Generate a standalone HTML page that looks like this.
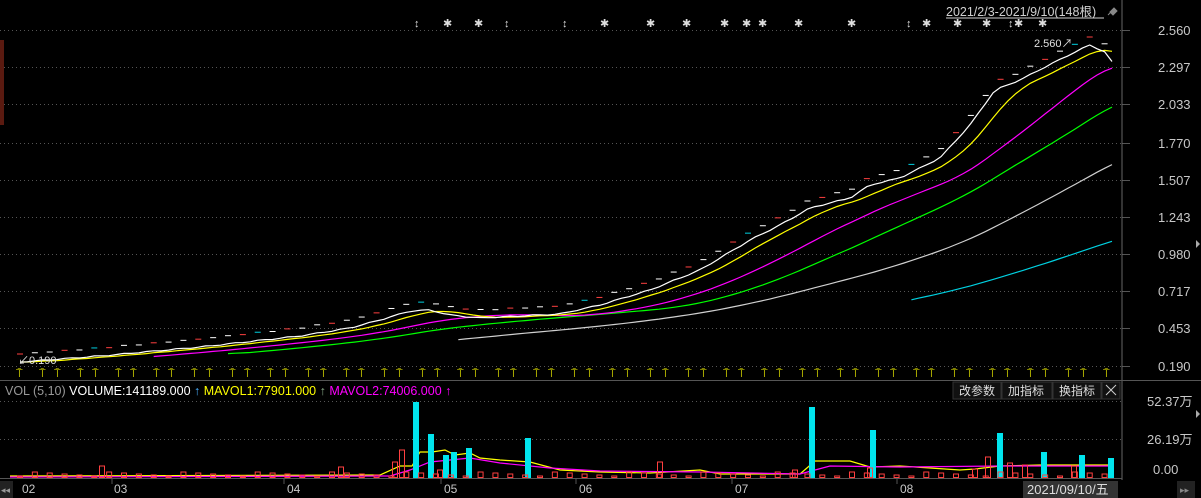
<!DOCTYPE html>
<html><head><meta charset="utf-8"><style>
html,body{margin:0;padding:0;background:#000;width:1201px;height:498px;overflow:hidden;font-family:"Liberation Sans","Noto Sans CJK SC",sans-serif}
svg{display:block}
text{font-family:"Liberation Sans","Noto Sans CJK SC",sans-serif}
</style></head><body>
<svg id="s" width="1201" height="498" xmlns="http://www.w3.org/2000/svg">
<rect width="1201" height="498" fill="#000"/>
<g id="grid" stroke="#555" stroke-dasharray="1,3" stroke-width="1"></g>
<line x1="1122" y1="0" x2="1122" y2="480" stroke="#666"/>
<line x1="0" y1="380.5" x2="1201" y2="380.5" stroke="#555"/>
<line x1="0" y1="478.5" x2="1122" y2="478.5" stroke="#555"/>
<rect x="0" y="40" width="4" height="85" fill="#5a1a10"/>
<g id="axis" fill="#c8c8c8" font-size="13"></g>
<g id="lines" fill="none" stroke-width="1.2"></g>
<g id="marks"></g>
<text x="946" y="16" fill="#d0d0d0" font-size="12.5">2021/2/3-2021/9/10(148根)</text>
<line x1="946" y1="18" x2="1104" y2="18" stroke="#d0d0d0"/>
<path d="M1110 12l4-4 3 3-4 4zM1111 12l-3 3" stroke="#888" fill="#888"/>
<text x="1034" y="47" fill="#e0e0e0" font-size="11">2.560↗</text>
<text x="18" y="364" fill="#e0e0e0" font-size="11">↙0.190</text>
<text x="5" y="395" font-size="12.5"><tspan fill="#999">VOL (5,10) </tspan><tspan fill="#fff">VOLUME:141189.000 </tspan><tspan fill="#4ab0ff">↑ </tspan><tspan fill="#ffff00">MAVOL1:77901.000 </tspan><tspan fill="#8a8">↑ </tspan><tspan fill="#ff00ff">MAVOL2:74006.000 ↑</tspan></text>
<g font-size="12" fill="#ddd">
<rect x="953" y="382" width="48" height="17" fill="#111" stroke="#333"/><text x="959" y="395">改参数</text>
<rect x="1002" y="382" width="50" height="17" fill="#111" stroke="#333"/><text x="1008" y="395">加指标</text>
<rect x="1053" y="382" width="48" height="17" fill="#111" stroke="#333"/><text x="1059" y="395">换指标</text>
<rect x="1102" y="382" width="18" height="17" fill="#111" stroke="#333"/><path d="M1106 385l10 10M1116 385l-10 10" stroke="#ccc"/>
</g>
<g font-size="13" fill="#c8c8c8">
<text x="1147" y="406">52.37万</text><text x="1147" y="444">26.19万</text><text x="1153" y="474">0.00</text>
</g>
<g font-size="12" fill="#c8c8c8">
<text x="22" y="493">02</text><text x="114" y="493">03</text><text x="287" y="493">04</text><text x="444" y="493">05</text><text x="579" y="493">06</text><text x="735" y="493">07</text><text x="900" y="493">08</text>
</g>
<g stroke="#555"><line x1="112" y1="479" x2="112" y2="484"/><line x1="284" y1="479" x2="284" y2="484"/><line x1="441" y1="479" x2="441" y2="484"/><line x1="576" y1="479" x2="576" y2="484"/><line x1="732" y1="479" x2="732" y2="484"/><line x1="897" y1="479" x2="897" y2="484"/></g>
<rect x="0" y="481" width="13" height="17" fill="#222"/><text x="1" y="493" fill="#999" font-size="9">◂◂</text>
<rect x="1023" y="481" width="95" height="17" fill="#333"/><text x="1027" y="494" fill="#ddd" font-size="13">2021/09/10/五</text>
<rect x="1177" y="481" width="18" height="17" fill="#222"/><text x="1180" y="493" fill="#888" font-size="9">▸▸</text>
<path d="M1196 240l4 4-4 4z" fill="#aaa"/><path d="M1196 410l4 4-4 4z" fill="#aaa"/>
</svg>
<script>
var ns="http://www.w3.org/2000/svg";
function el(p,t,a,txt){var e=document.createElementNS(ns,t);for(var k in a)e.setAttribute(k,a[k]);if(txt)e.textContent=txt;document.getElementById(p).appendChild(e);return e;}
var ly=[30,67,104,143,180,217,254,291,328,366],lb=["2.560","2.297","2.033","1.770","1.507","1.243","0.980","0.717","0.453","0.190"];
ly.forEach(function(y,i){el('grid','line',{x1:0,y1:y+.5,x2:1122,y2:y+.5});el('grid','line',{x1:1122,y1:y+.5,x2:1130,y2:y+.5,'stroke-dasharray':'none'});el('axis','text',{x:1158,y:y+5},lb[i]);});
el('grid','line',{x1:0,y1:401.5,x2:1122,y2:401.5});el('grid','line',{x1:0,y1:439.5,x2:1122,y2:439.5});
var K=[[20,362],[100,356],[200,347],[300,336],[350,328],[380,320],[410,311],[430,310],[450,315],[480,318],[520,316],[560,314],[600,305],[650,290],[700,270],[750,240],[780,225],[810,208],[850,198],[870,185],[900,178],[940,158],[970,125],[995,90],[1020,80],[1045,67],[1075,52],[1090,45],[1105,52],[1112,62]];
function f(x){for(var i=0;i<K.length-1;i++){if(x<=K[i+1][0]){var t=(x-K[i][0])/(K[i+1][0]-K[i][0]);return K[i][1]+t*(K[i+1][1]-K[i][1]);}}return K[K.length-1][1];}
var N=148,xs=[],ys=[];for(var i=0;i<N;i++){var x=20+i*(1092/(N-1));xs.push(x);ys.push(f(x)+Math.sin(i*1.7)*0.5);}
function line(vals,start,col){var d='';for(var i=start;i<N;i++)d+=(i==start?'M':'L')+xs[i].toFixed(1)+' '+vals[i].toFixed(1);el('lines','path',{d:d,stroke:col});}
function ma(n){var r=[];for(var i=0;i<N;i++){var s=0,c=0;for(var j=Math.max(0,i-n+1);j<=i;j++){s+=ys[j];c++;}r.push(s/c);}return r;}
line(ma(120),120,'#00d0e0');line(ma(60),59,'#d0d0d0');line(ma(32),28,'#00ff00');line(ma(18),18,'#ff00ff');line(ma(6),0,'#ffff00');line(ys,0,'#ffffff');
for(var i=0;i<N;i++){if(i%2)continue;var c=(i%6==0)?'#ff4040':'#fff';if(i%22==10)c='#00d0e0';el('marks','line',{x1:xs[i]-3,y1:ys[i]-8,x2:xs[i]+3,y2:ys[i]-8,stroke:c});}
var ax=20,g=[23,15];for(var k=0;ax<1112;k++){el('marks','text',{x:ax-4,y:377,fill:'#ffff00','font-size':'11'},'⍑');ax+=g[k%2];}
var st=[[418,'↕'],[447,'✱'],[478,'✱'],[508,'↕'],[566,'↕'],[604,'✱'],[650,'✱'],[686,'✱'],[724,'✱'],[746,'✱'],[762,'✱'],[798,'✱'],[851,'✱'],[910,'↕'],[926,'✱'],[957,'✱'],[986,'✱'],[1012,'↕'],[1018,'✱'],[1042,'✱']];
st.forEach(function(s){el('marks','text',{x:s[0]-4,y:27,fill:'#ddd','font-size':'11'},s[1]);});
var base=478,cy=[[416,402],[431,434],[446,455],[454,452],[469,448],[528,438],[812,407],[873,430],[1000,433],[1044,452],[1082,455],[1111,458]];
cy.forEach(function(b){el('marks','rect',{x:b[0]-3,y:b[1],width:6,height:base-b[1],fill:'#00e5ee'});});
var rd=[[102,466],[341,467],[395,462],[402,450],[440,470],[660,462],[988,457],[1010,463],[1025,465],[975,469],[870,468],[795,470],[1074,466]];
for(var i=0;i<N;i+=2){var h=2+((i*37)%5);rd.push([xs[i],base-h]);}
rd.forEach(function(b){el('marks','rect',{x:b[0]-2.5,y:b[1],width:5,height:base-b[1]-.5,fill:'none',stroke:'#ff4040'});});
function vl(pts,col){var d='';pts.forEach(function(p,i){d+=(i?'L':'M')+p[0]+' '+p[1];});el('lines','path',{d:d,stroke:col});}
vl([[10,476],[380,475],[400,466],[412,466],[420,452],[432,452],[445,450],[455,455],[470,453],[480,458],[500,460],[530,462],[560,470],[600,472],[650,473],[700,470],[720,474],[800,474],[815,461],[850,461],[870,467],[900,466],[960,470],[975,469],[1000,466],[1040,465],[1112,465]],'#ffff00');
vl([[10,477],[390,476],[410,470],[430,462],[450,460],[470,458],[500,463],[550,468],[600,471],[700,472],[800,474],[830,466],[900,467],[1000,466],[1112,466]],'#ff00ff');
</script>
</body></html>
